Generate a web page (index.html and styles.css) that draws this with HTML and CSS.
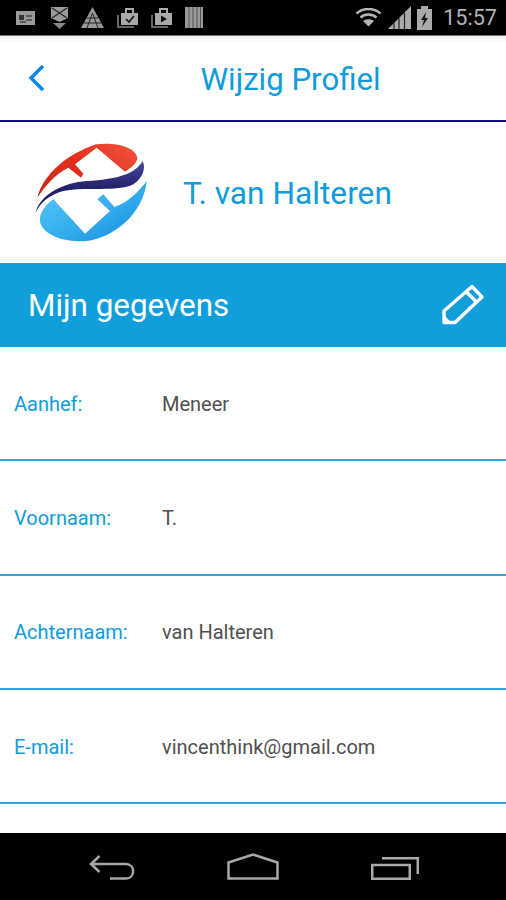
FILE: index.html
```html
<!DOCTYPE html>
<html lang="nl">
<head>
    <meta charset="UTF-8">
    <meta name="viewport" content="width=device-width, initial-scale=1.0">
    <title>Wijzig Profiel</title>
    <link rel="stylesheet" href="styles.css">
</head>
<body>
    <div class="phone">
        <!-- Statusbalk -->
        <div class="statusbar">
            <div class="status-left">
                <svg class="first" width="19" height="16" viewBox="0 0 19 16"><rect y="1" width="19" height="14" fill="#999"/><rect x="3" y="5" width="5" height="5" fill="#333"/><path d="M10 6h6M10 10h6M4 12h6" stroke="#444" stroke-width="1.5"/></svg>
                <svg width="17" height="24" viewBox="0 0 17 24"><path d="M0 1h17v11l-8.500 4L0 12z" fill="#999"/><path d="M1 2l15 10M16 2L1 12" stroke="#222" stroke-width="1.2"/><path d="M2 17h13l-6.500 6z" fill="#888"/></svg>
                <svg width="23" height="21" viewBox="0 0 23 21"><path d="M11.500 0L23 21H0z" fill="#999"/><path d="M6 11h11M3 16h17M11.500 6L6 21M11.500 6L17 21" stroke="#222" stroke-width="1"/></svg>
                <svg width="21" height="21" viewBox="0 0 21 21"><path d="M4 6h17v12H4z" fill="#aaa"/><path d="M9 6V2h7v4" fill="none" stroke="#aaa" stroke-width="2"/><path d="M9 12l3 3 5-6" fill="none" stroke="#111" stroke-width="1.600"/><path d="M1 8v12h16" fill="none" stroke="#888" stroke-width="1.500"/></svg>
                <svg width="21" height="21" viewBox="0 0 21 21"><path d="M4 6h17v12H4z" fill="#aaa"/><path d="M9 6V2h7v4" fill="none" stroke="#aaa" stroke-width="2"/><path d="M10 8.500l6 3.500-6 3.500z" fill="#111"/><path d="M1 8v12h16" fill="none" stroke="#888" stroke-width="1.500"/></svg>
                <svg width="18" height="21" viewBox="0 0 18 21"><rect width="18" height="21" fill="#999"/><path d="M4 0v21M8 0v21M12 0v21M15.500 0v21" stroke="#555" stroke-width="1"/></svg>
            </div>
            <div class="status-right">
                <svg width="27" height="19" viewBox="0 0 27 19"><path d="M13.500 18.500L8 13c3-2.500 8-2.500 11 0z" fill="#b4b4b4"/><path d="M5.500 9.500c4.500-4 11.500-4 16 0M1.500 5.500c7-6 17-6 24 0" fill="none" stroke="#b4b4b4" stroke-width="2.600"/></svg>
                <svg width="23" height="23" viewBox="0 0 23 23"><path d="M0 23L23 0v23z" fill="#aaa"/><path d="M6 17v6M11 12v11M16.500 7v16" stroke="#222" stroke-width="1.200"/></svg>
                <svg width="15" height="24" viewBox="0 0 15 24"><path d="M4 0h7v3h4v21H0V3h4z" fill="#aaa"/><path d="M9 6L4 14h3l-2 7 6-9H8z" fill="#111"/></svg>
                <span class="clock">15:57</span>
            </div>
        </div>

        <!-- Kop -->
        <div class="topbar">
            <svg class="back" width="18" height="28" viewBox="0 0 18 28"><path d="M15 2L3 14l12 12" fill="none" stroke="#0a84f0" stroke-width="3.400"/></svg>
            <h1>Wijzig Profiel</h1>
        </div>

        <div class="profile">
            <svg class="logo" width="140" height="120" viewBox="0 0 420 360">
                <defs>
                    <linearGradient id="rood" x1="0" y1="1" x2="1" y2="0.3"><stop offset="0" stop-color="#c92a18"/><stop offset="0.6" stop-color="#e4301c"/><stop offset="1" stop-color="#ee4c36"/></linearGradient>
                    <linearGradient id="navy" x1="0" y1="0" x2="0" y2="1"><stop offset="0" stop-color="#4a48a0"/><stop offset="0.5" stop-color="#24236e"/><stop offset="1" stop-color="#1a1a5a"/></linearGradient>
                    <linearGradient id="blauw" x1="0" y1="0" x2="1" y2="1"><stop offset="0" stop-color="#5ccdf8"/><stop offset="0.6" stop-color="#2fa9ec"/><stop offset="1" stop-color="#1284da"/></linearGradient>
                </defs>
                <path d="M52 200C70 130 140 70 228 40C290 32 350 50 352 82C350 97 335 110 315 122L230 50L165 100L190 128L183 140L145 110C105 130 75 165 52 200z" fill="url(#rood)"/>
                <path d="M47 245C60 190 130 155 200 150C290 145 345 130 368 90C378 110 370 140 340 160C290 185 200 165 130 180C90 190 60 215 47 245z" fill="url(#navy)"/>
                <path d="M100 205C70 225 50 260 65 285C85 320 150 335 200 330C280 320 370 250 380 150C350 190 320 215 283 228L250 190L232 205L270 240L195 308z" fill="url(#blauw)"/>
            </svg>
            <span class="name">T. van Halteren</span>
        </div>

        <div class="banner">
            <span>Mijn gegevens</span>
            <svg width="44" height="44" viewBox="0 0 44 44"><path d="M31 3.500L41 14 14 39.500H3V28zM25.500 9L36 19.500" fill="none" stroke="#fff" stroke-width="3.400" stroke-linejoin="round"/><path d="M3 32l7 7.500H3z" fill="#fff"/></svg>
        </div>

        <div class="rows">
            <div class="row"><span class="label">Aanhef:</span><span class="value">Meneer</span></div>
            <div class="row"><span class="label">Voornaam:</span><span class="value">T.</span></div>
            <div class="row"><span class="label">Achternaam:</span><span class="value">van Halteren</span></div>
            <div class="row"><span class="label">E-mail:</span><span class="value">vincenthink@gmail.com</span></div>
        </div>

        <!-- Navigatie -->
        <div class="navbar">
            <svg width="48" height="26" viewBox="0 0 48 26"><path d="M10.500 2L2 10l8.500 8M2 10h35c9.500 0 9.500 14.500 0 14.500H21" fill="none" stroke="#a8a8a8" stroke-width="2.500"/></svg>
            <svg width="52" height="27" viewBox="0 0 52 27"><path d="M1.500 9.500L26 1.500l24.500 8v16h-49z" fill="none" stroke="#a8a8a8" stroke-width="2.500"/></svg>
            <svg class="recents" width="48" height="23" viewBox="0 0 48 23"><path d="M11 1.250h35.750V17" fill="none" stroke="#a8a8a8" stroke-width="2.500"/><path d="M1.250 8h37.500v13.750H1.250z" fill="none" stroke="#a8a8a8" stroke-width="2.500"/></svg>
        </div>
    </div>
</body>
</html>
```

FILE: styles.css
```css
* {
    box-sizing: border-box;
}
body {
    margin: 0;
    font-family: Roboto, "Noto Sans", sans-serif;
    background: #fff;
}
.phone {
    width: 506px;
    height: 900px;
    display: flex;
    flex-direction: column;
    overflow: hidden;
}
.statusbar {
    height: 36px;
    flex: none;
    background: #000;
    border-bottom: 1px solid #777;
    display: flex;
    justify-content: space-between;
    align-items: center;
    padding: 0 9px 0 16px;
}
.status-left {
    display: flex;
    align-items: center;
    gap: 13px;
}
.status-left .first {
    margin-right: 3px;
}
.status-right {
    display: flex;
    align-items: center;
    gap: 6px;
}
.clock {
    color: #b4b4b4;
    font-size: 21.600px;
    margin-left: 5px;
}
.topbar {
    height: 86px;
    flex: none;
    display: flex;
    align-items: center;
    justify-content: center;
    padding: 2px 0 0 75px;
    border-bottom: 2px solid #0c0c8c;
    background: linear-gradient(#f0f0f0, #fff 7px);
    position: relative;
}
.back {
    position: absolute;
    left: 28px;
    top: 28px;
}
.topbar h1 {
    margin: 0;
    font-size: 31.200px;
    font-weight: 400;
    color: #0f9bdc;
}
.profile {
    height: 141px;
    flex: none;
    display: flex;
    align-items: center;
    padding-left: 20px;
    gap: 23px;
}
.logo {
    margin-bottom: 4px;
}
.name {
    font-size: 31.700px;
    color: #0f9bdc;
    margin-top: 2px;
}
.banner {
    height: 84px;
    flex: none;
    background: #119fdc;
    color: #fff;
    font-size: 31.400px;
    display: flex;
    align-items: center;
    justify-content: space-between;
    padding: 0 21px 0 28px;
}
.rows {
    flex: 1;
    overflow: hidden;
}
.row {
    height: 114.300px;
    display: flex;
    align-items: center;
    padding: 1px 0 0 14px;
    border-bottom: 2px solid #2ea3de;
    font-size: 20px;
}
.label {
    width: 148px;
    color: #0f9bdc;
}
.value {
    color: #505050;
}
.navbar {
    height: 67px;
    flex: none;
    background: #000;
    display: flex;
    align-items: flex-end;
    gap: 90px;
    padding: 0 0 20px 89px;
}
.recents {
    margin-left: 2px;
}
```
